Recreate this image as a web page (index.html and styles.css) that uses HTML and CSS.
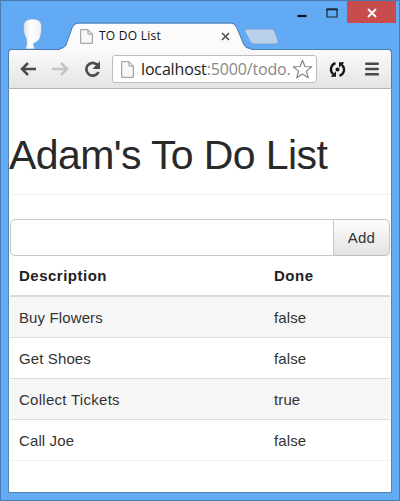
FILE: index.html
```html
<!DOCTYPE html>
<html lang="en">
<head>
<meta charset="utf-8">
<title>TO DO List</title>
<link rel="stylesheet" href="styles.css">
</head>
<body>
<div class="window">
  <header class="titlebar">
    <svg class="avatar" width="24" height="31" viewBox="0 0 24 31">
      <defs><linearGradient id="skin"><stop offset="0" stop-color="#dce3ea"/><stop offset=".4" stop-color="#fff"/><stop offset="1" stop-color="#edf1f5"/></linearGradient></defs>
      <path d="M2.500 9C2.500 3 6 1 12 1c6 0 9 3 8.500 9 0 8-2 14-7.500 15-1 2 0 4 1 6H4c2-3 2-7 1-11-2-3-2.500-7-2.500-11z" fill="url(#skin)" stroke="#7ea3cf" stroke-width=".7"/>
    </svg>
    <div class="tab">
      <svg class="tab-shape" width="192" height="28" viewBox="0 0 192 28">
        <path d="M0 28V27Q4 27 6 23L12 6Q14 1.500 18 1.500H171Q175 1.500 177 6L184 23Q186 27 191 27V28z" fill="#fbfbfb"/>
        <path d="M0 26.500Q4 26.500 6 23L12 6Q14 1 18 1H171Q175 1 177 6L184 23Q186 26.500 191 26.500" fill="none" stroke="#4679ae"/>
      </svg>
      <svg class="page-icon" width="13" height="15" viewBox="0 0 13 15"><path d="M.7.700H8L12.300 5v9.300H.7zM8 .7V5h4.300" fill="#f8f8f8" stroke="#929292"/></svg>
      <span class="tab-title">TO DO List</span>
      <svg class="tab-close" width="9" height="9" viewBox="0 0 9 9"><path d="M1 1l7 7M8 1L1 8" stroke="#555" stroke-width="1.700"/></svg>
    </div>
    <svg class="new-tab" width="35" height="17" viewBox="0 0 35 17"><path d="M3 1h25q2 0 3 3l3 9q1 3-2 3H10q-3 0-4-3L1 4Q0 1 3 1z" fill="#b8d0e8" stroke="#6a9bd0" stroke-width=".8"/></svg>
    <div class="controls">
      <svg class="minimize" width="10" height="4" viewBox="0 0 10 4"><path d="M.5 2h9" stroke="#111" stroke-width="2.200"/></svg>
      <svg class="maximize" width="12" height="10" viewBox="0 0 12 10"><path d="M1 1.500h10v7.500H1z" fill="none" stroke="#172536" stroke-width="1.200"/><path d="M.4 1.300h11.200" stroke="#172536" stroke-width="2"/></svg>
      <div class="close"><svg width="10" height="10" viewBox="0 0 10 10"><path d="M1 1l8 8M9 1L1 9" stroke="#fff" stroke-width="1.900"/></svg></div>
    </div>
  </header>
  <nav class="toolbar">
    <svg class="back" width="17" height="14" viewBox="0 0 17 14"><path d="M16 7H2M8 1L2 7l6 6" fill="none" stroke="#4a4a4a" stroke-width="2.500"/></svg>
    <svg class="forward" width="17" height="14" viewBox="0 0 17 14"><path d="M0 7h15M9 1l6 6-6 6" fill="none" stroke="#c4c4c4" stroke-width="2.500"/></svg>
    <svg class="reload" width="17" height="17" viewBox="0 0 17 17"><path d="M13.500 4A6.400 6.400 0 1 0 14.500 11" fill="none" stroke="#4c4c4c" stroke-width="2.700"/><path d="M16 0v8H8.500z" fill="#4c4c4c"/></svg>
    <div class="address">
      <svg class="page-icon" width="13" height="17" viewBox="0 0 13 17"><path d="M.7.700H8L12.300 5v11.300H.7zM8 .7V5h4.300" fill="#f8f8f8" stroke="#929292"/></svg>
      <span class="url">localhost<span class="path">:5000/todo.</span></span>
      <svg class="star" width="21" height="21" viewBox="0 0 21 21"><path d="M10.500 1.300l2.400 6.200 6.900.3-5.400 4.300 1.900 6.700-5.800-3.800-5.800 3.800 1.900-6.700L1.200 7.800l6.900-.3z" fill="#fff" stroke="#858585" stroke-width="1.200" stroke-linejoin="round"/></svg>
    </div>
    <svg class="sync" width="17" height="17" viewBox="0 0 17 17"><path d="M6.500 2.200A6.400 6.400 0 0 0 4.200 13.200M10.500 14.800A6.400 6.400 0 0 0 12.800 3.800" fill="none" stroke="#151515" stroke-width="2.300"/><path d="M1.500 15.800h5.500v-5.500zM15.500 1.200H10v5.500z" fill="#151515"/><circle cx="8.500" cy="8.500" r="2" fill="#151515"/></svg>
    <svg class="menu" width="14" height="14" viewBox="0 0 14 14"><path d="M1.200 1.700h11.600M1.200 7h11.600M1.200 12.300h11.600" stroke="#494949" stroke-width="2.600" stroke-linecap="round"/></svg>
  </nav>
  <main class="page">
    <h1>Adam's To Do List</h1>
    <form class="entry"><input type="text" aria-label="Description"><button type="button">Add</button></form>
    <table>
      <thead><tr><th class="description">Description</th><th class="done">Done</th></tr></thead>
      <tbody>
        <tr><td>Buy Flowers</td><td>false</td></tr>
        <tr><td>Get Shoes</td><td>false</td></tr>
        <tr><td class="wide">Collect Tickets</td><td>true</td></tr>
        <tr><td>Call Joe</td><td>false</td></tr>
      </tbody>
    </table>
  </main>
</div>
</body>
</html>
```
FILE: styles.css
```css
* { box-sizing: border-box; }
body { margin: 0; }
svg { display: block; flex: none; }
.window {
  width: 400px;
  height: 501px;
  padding: 0 7px 7px;
  display: flex;
  flex-direction: column;
  border: 1px solid #487bb3;
  background: #63aaf5;
  font-family: "Liberation Sans", sans-serif;
  overflow: hidden;
}
.titlebar { height: 48px; flex: none; display: flex; align-items: flex-start; }
.avatar { margin: 17px 0 0 13px; }
.tab {
  position: relative;
  z-index: 1;
  width: 192px;
  height: 28px;
  margin: 21px 0 -1px 15px;
  padding-left: 20px;
  display: flex;
  align-items: center;
  flex: none;
}
.tab-shape { position: absolute; left: 0; top: 0; }
.tab .page-icon, .tab-title, .tab-close { position: relative; }
.tab-title { width: 120px; margin-left: 6px; font: 12px/16px "Open Sans", sans-serif; letter-spacing: .25px; color: #111; }
.tab-close { margin-left: 2px; }
.new-tab { margin: 27px 0 0 -8px; }
.controls { display: flex; align-items: flex-start; margin-left: auto; margin-right: -4px; }
.minimize { margin-top: 13px; }
.maximize { margin: 7px 9px 0 19px; }
.close { width: 49px; height: 22px; padding-top: 1px; display: flex; align-items: center; justify-content: center; background: #c84c4c; }
.toolbar {
  height: 40px;
  flex: none;
  display: flex;
  align-items: center;
  padding-left: 11px;
  border: 1px solid #4b7bae;
  border-bottom-color: #b5b5b5;
  border-radius: 4px 4px 0 0;
  background: linear-gradient(#fafafa, #e4e4e4);
}
.forward { margin-left: 15px; }
.reload { margin-left: 15px; }
.address {
  width: 205px;
  height: 28px;
  margin-left: 11px;
  padding: 0 3px 0 8px;
  display: flex;
  align-items: center;
  border: 1px solid #bcbcbc;
  border-radius: 3px;
  background: #fff;
}
.url { width: 151px; margin: -1px 0 0 7px; white-space: nowrap; font: 16px/22px "Open Sans", sans-serif; letter-spacing: -.15px; color: #222; }
.path { color: #888; }
.star { margin-left: auto; }
.sync { margin-left: 12px; }
.menu { margin-left: 19px; }
.page { flex: 1; padding: 44px 1px 0; border: 1px solid #5682ad; border-top: 0; background: #fff; }
h1 {
  height: 62px;
  margin: 0 0 24px 2px;
  border-bottom: 1px solid #eee;
  font-weight: 400;
  font-size: 41px;
  line-height: 44px;
  letter-spacing: -.6px;
  text-indent: -3px;
  white-space: nowrap;
  color: #292929;
}
.entry { height: 37px; margin: 0 0 1px; display: flex; }
input { width: 324px; height: 37px; border: 1px solid #c8c8c8; border-radius: 5px 0 0 5px; background: #fff; }
button {
  flex: 1;
  height: 37px;
  padding: 0;
  border: 1px solid #c4c4c4;
  border-left-width: 0;
  border-bottom-color: #bcbcbc;
  border-radius: 0 5px 5px 0;
  background: linear-gradient(#fdfdfd, #e3e3e3);
  font: 15px/20px "Liberation Sans", sans-serif;
  letter-spacing: .2px;
  color: #333;
}
table { width: 100%; border-collapse: separate; border-spacing: 0; table-layout: fixed; font-size: 15px; line-height: 20px; letter-spacing: .12px; color: #333; }
th, td { padding: 0 9px; text-align: left; }
th { height: 40px; border-bottom: 2px solid #d9d9d9; letter-spacing: .5px; color: #222; }
.description { width: 255px; }
.wide { letter-spacing: .28px; }
td { height: 41px; padding-top: 1px; border-bottom: 1px solid #ddd; }
tbody tr:nth-child(odd) td { background: #f6f6f6; }
tbody tr:last-child td { border-color: #f0f0f0; }
```
